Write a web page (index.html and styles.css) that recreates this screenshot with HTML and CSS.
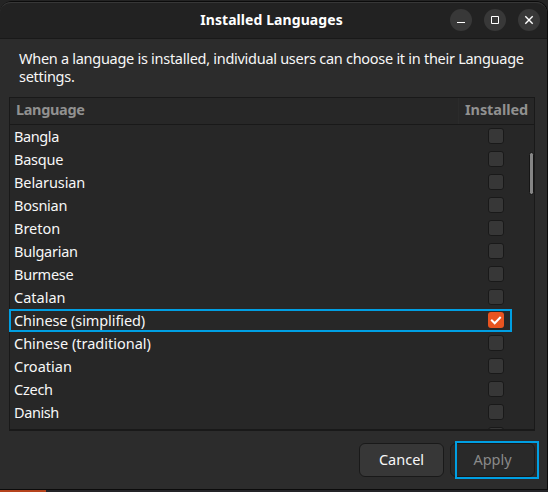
FILE: index.html
```
<!DOCTYPE html>
<html lang="en">
<head>
<meta charset="utf-8">
<title>Installed Languages</title>
<link rel="stylesheet" href="styles.css">
</head>
<body>
<main class="window">
  <header class="titlebar">
    <h1>Installed Languages</h1>
    <div class="controls">
      <button class="control" aria-label="Minimize"><svg viewBox="0 0 22 22"><path d="M7 13.5h8"/></svg></button>
      <button class="control" aria-label="Maximize"><svg viewBox="0 0 22 22"><path d="M7.5 7.5h7v7h-7z"/></svg></button>
      <button class="control" aria-label="Close"><svg viewBox="0 0 22 22"><path d="M7.3 7.3l7.4 7.4M14.7 7.3l-7.4 7.4" stroke-width="1.4"/></svg></button>
    </div>
  </header>
  <p class="intro">When a language is installed, individual users can choose it in their Language<br>settings.</p>
  <section class="list">
    <div class="head"><span class="head-name">Language</span><span class="head-state">Installed</span></div>
    <div class="rows">
      <div class="row"><span class="tighter">Bangla</span><i class="check"></i></div>
      <div class="row"><span class="tight">Basque</span><i class="check"></i></div>
      <div class="row"><span class="snug">Belarusian</span><i class="check"></i></div>
      <div class="row"><span class="tight">Bosnian</span><i class="check"></i></div>
      <div class="row"><span>Breton</span><i class="check"></i></div>
      <div class="row"><span class="tight">Bulgarian</span><i class="check"></i></div>
      <div class="row"><span class="tight">Burmese</span><i class="check"></i></div>
      <div class="row"><span>Catalan</span><i class="check"></i></div>
      <div class="row marked"><span class="snug">Chinese (simplified)</span><i class="check on"><svg viewBox="0 0 16 16"><path d="M3.2 7.7l3.5 3.5 6-6.2"/></svg></i></div>
      <div class="row"><span>Chinese (traditional)</span><i class="check"></i></div>
      <div class="row"><span>Croatian</span><i class="check"></i></div>
      <div class="row"><span class="tight">Czech</span><i class="check"></i></div>
      <div class="row"><span class="tighter">Danish</span><i class="check"></i></div>
      <div class="row"><span>Divehi</span><i class="check"></i></div>
    </div>
    <div class="thumb"></div>
  </section>
  <footer class="actions">
    <button class="btn">Cancel</button>
    <button class="btn disabled">Apply<span class="marker"></span></button>
  </footer>
</main>
<div class="desktop"><span class="accent"></span></div>
</body>
</html>
```
FILE: styles.css
```
* { box-sizing: border-box; }
body {
  margin: 0;
  width: 548px;
  height: 492px;
  padding-top: 1px;
  overflow: hidden;
  background: #242424;
  color: #f7f7f7;
  font: 14.5px/18px "Noto Sans", "Open Sans", sans-serif;
}
button { font: inherit; color: inherit; padding: 0; }
.window {
  display: flex;
  flex-direction: column;
  height: 489px;
  border: 1px solid #0b0b0b;
  border-left: 0;
  border-radius: 12px 12px 0 0;
  background: #2c2c2c;
}
.titlebar {
  position: relative;
  display: flex;
  flex: none;
  height: 37px;
  align-items: center;
  justify-content: center;
  border-top: 1px solid #373737;
  border-bottom: 1px solid #191919;
  border-radius: 11px 11px 0 0;
  background: #222;
}
h1 { margin: 0 4px 2px 0; font-size: 14px; line-height: 18px; letter-spacing: 0.08px; font-weight: 700; color: #fff; }
.controls { position: absolute; right: 7px; top: 6px; display: flex; gap: 12px; }
.control { width: 22px; height: 22px; border: 0; border-radius: 50%; background: #383838; }
.control svg { display: block; width: 22px; height: 22px; fill: none; stroke: #fff; }
.intro { margin: 10px 0 0 19px; height: 48px; flex: none; white-space: nowrap; line-height: 18px; letter-spacing: -0.28px; }
.list {
  position: relative;
  width: 526px;
  height: 334px;
  margin-left: 9px;
  flex: none;
  border: 1px solid #191919;
  border-bottom-width: 2px;
  background: #272727;
}
.head { display: flex; height: 27px; border-bottom: 1px solid #191919; color: #919190; font-weight: 700; line-height: 23px; }
.head-name { width: 449px; padding-left: 6px; border-right: 1px solid #2b2b2b; letter-spacing: -0.35px; }
.head-state { padding-left: 6px; letter-spacing: -0.08px; }
.rows { height: 304px; margin-left: -1px; overflow: hidden; }
.row { display: flex; height: 23px; width: 503px; padding: 3px 8px 0 5px; justify-content: space-between; line-height: 16px; white-space: nowrap; }
.snug { letter-spacing: -0.1px; }
.tight { letter-spacing: -0.25px; }
.tighter { letter-spacing: -0.4px; }
.check { width: 16px; height: 16px; flex: none; border: 1px solid #191919; border-radius: 3px; background: #373737; }
.marked { border: 2px solid #009fe3; padding: 1px 6px 0 3px; }
.on { border: 0; background: #e95420; }
.on svg { display: block; fill: none; stroke: #fff; stroke-width: 2; }
.thumb { position: absolute; top: 54px; right: 0; width: 5px; height: 43px; border: 1px solid #151515; border-radius: 3px; background: #858585; }
.actions { display: flex; gap: 6px; margin: 12px 12px 0 0; justify-content: flex-end; }
.btn { position: relative; width: 85px; height: 34px; padding-bottom: 2px; border: 1px solid #191919; border-radius: 6px; background: #373737; }
.disabled { background: #292929; color: #8a8a8a; }
.marker { position: absolute; left: 4px; top: -3px; width: 84px; height: 38px; border: 2px solid #009fe3; }
.desktop { height: 2px; background: #242428; }
.accent { display: block; width: 46px; height: 2px; background: #b5431c; }
```
